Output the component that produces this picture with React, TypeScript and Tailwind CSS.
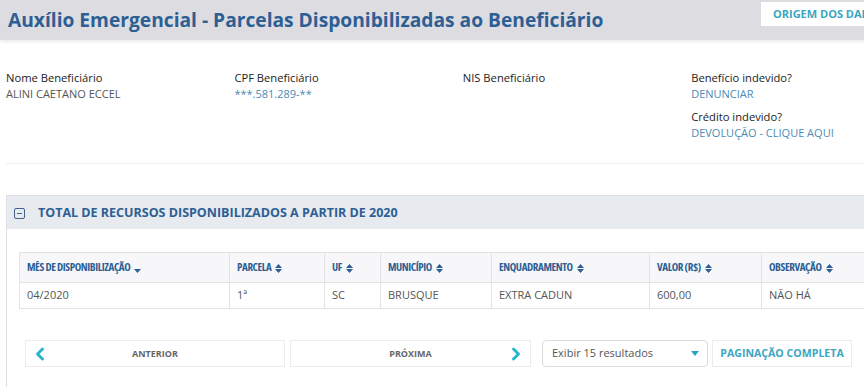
import { ChevronLeft, ChevronRight } from "lucide-react";

const infoCols = [
  { label: "Nome Beneficiário", value: "ALINI CAETANO ECCEL", link: false },
  { label: "CPF Beneficiário", value: "***.581.289-**", link: true },
  { label: "NIS Beneficiário", value: "", link: false },
];

const headers = [
  { name: "MÊS DE DISPONIBILIZAÇÃO", w: "w-[210px]", sorted: true },
  { name: "PARCELA", w: "w-[95px]" },
  { name: "UF", w: "w-[56px]" },
  { name: "MUNICÍPIO", w: "w-[111px]" },
  { name: "ENQUADRAMENTO", w: "w-[158px]" },
  { name: "VALOR (R$)", w: "w-[112px]" },
  { name: "OBSERVAÇÃO", w: "w-[140px]" },
];

const row = ["04/2020", "1ª", "SC", "BRUSQUE", "EXTRA CADUN", "600,00", "NÃO HÁ"];

function SortIcon({ down }: { down?: boolean }) {
  return (
    <svg width="7" height="9" viewBox="0 0 7 9" className="ml-1 inline-block">
      {!down && <path d="M0 4L3.5 0L7 4Z" fill="#2d5f94" />}
      <path d="M0 5L3.5 9L7 5Z" fill="#2d5f94" />
    </svg>
  );
}

export default function App() {
  return (
    <div className="h-[388px] w-[864px] overflow-hidden bg-white font-['Open_Sans',sans-serif]">
      <div className="w-[920px]">
        <header className="relative flex h-10 items-center justify-between bg-[#dddce0] pl-2 shadow-[0_2px_3px_rgba(0,0,0,0.08)]">
          <h1 className="text-[19.2px] font-bold leading-none text-[#2d5f94]">
            Auxílio Emergencial - Parcelas Disponibilizadas ao Beneficiário
          </h1>
          <div className="mb-3 mr-[-2px] flex h-6 w-[161px] items-center bg-white pl-3 text-[11px] font-bold text-[#3aa6c0]">
            ORIGEM DOS DADOS
          </div>
        </header>

        <section className="ml-1.5 flex border-b border-[#eeeeee] pb-[22px] pt-[30px] text-[11.2px] leading-4">
          {infoCols.map((c) => (
            <div key={c.label} className="w-[228.4px]">
              <div className="text-[#222]">{c.label}</div>
              <div className={c.link ? "text-[11px] text-[#4b8bb5]" : "text-[11px] text-[#555]"}>{c.value}</div>
            </div>
          ))}
          <div className="flex flex-col gap-[7px]">
            <div>
              <div className="text-[#222]">Benefício indevido?</div>
              <div className="text-[11px] text-[#4b8bb5]">DENUNCIAR</div>
            </div>
            <div>
              <div className="text-[#222]">Crédito indevido?</div>
              <div className="text-[11px] text-[#4b8bb5]">DEVOLUÇÃO - CLIQUE AQUI</div>
            </div>
          </div>
        </section>

        <section className="ml-1.5 mt-[31px] border border-[#e0e0e4] border-b-0">
          <div className="flex h-[33px] items-center gap-[13px] bg-[#e7eaef] pl-[7px] pt-px">
            <svg width="11" height="11" viewBox="0 0 11 11">
              <rect x="0.5" y="0.5" width="10" height="10" rx="1.5" fill="none" stroke="#44628a" />
              <path d="M3 5.5H8" stroke="#44628a" />
            </svg>
            <h2 className="text-[12.5px] font-bold text-[#2d5f94]">
              TOTAL DE RECURSOS DISPONIBILIZADOS A PARTIR DE 2020
            </h2>
          </div>

          <div className="px-3 pt-[23px]">
            <table className="table-fixed border-collapse">
              <thead>
                <tr className="h-[30px] bg-[#f7f7f9]">
                  {headers.map((h) => (
                    <th
                      key={h.name}
                      className={`${h.w} border border-[#e2e2e6] pl-[7px] text-left text-[11px] font-bold tracking-[-0.4px] text-[#2d5f94] [font-stretch:condensed]`}
                    >
                      {h.name}
                      <SortIcon down={h.sorted} />
                    </th>
                  ))}
                </tr>
              </thead>
              <tbody>
                <tr className="h-[26px]">
                  {row.map((v, i) => (
                    <td key={i} className="border border-[#e2e2e6] pl-[7px] text-[11px] text-[#555]">
                      {v}
                    </td>
                  ))}
                </tr>
              </tbody>
            </table>

            <div className="flex items-center pb-5 pl-[6px] pt-[31px]">
              <button className="relative flex h-[27px] w-[260px] items-center justify-center border border-[#ececef] text-[9px] font-bold text-[#666]">
                <ChevronLeft className="absolute left-1 h-5 w-5 text-[#27b5cc]" strokeWidth={3.5} />
                ANTERIOR
              </button>
              <button className="relative ml-[5px] flex h-[27px] w-[241px] items-center justify-center border border-[#ececef] text-[9px] font-bold text-[#666]">
                PRÓXIMA
                <ChevronRight className="absolute right-1 h-5 w-5 text-[#27b5cc]" strokeWidth={3.5} />
              </button>
              <div className="ml-[11px] flex h-[27px] w-[166px] items-center justify-between rounded-sm border border-[#dcdce0] pl-[9px] pr-2 text-[11px] text-[#555]">
                Exibir 15 resultados
                <svg width="8" height="5" viewBox="0 0 8 5">
                  <path d="M0 0H8L4 5Z" fill="#2aa3c6" />
                </svg>
              </div>
              <button className="ml-1 flex h-[27px] w-[140px] items-center justify-center border border-[#ececef] text-[10.6px] font-bold text-[#3aa6c0]">
                PAGINAÇÃO COMPLETA
              </button>
            </div>
          </div>
        </section>
      </div>
    </div>
  );
}
